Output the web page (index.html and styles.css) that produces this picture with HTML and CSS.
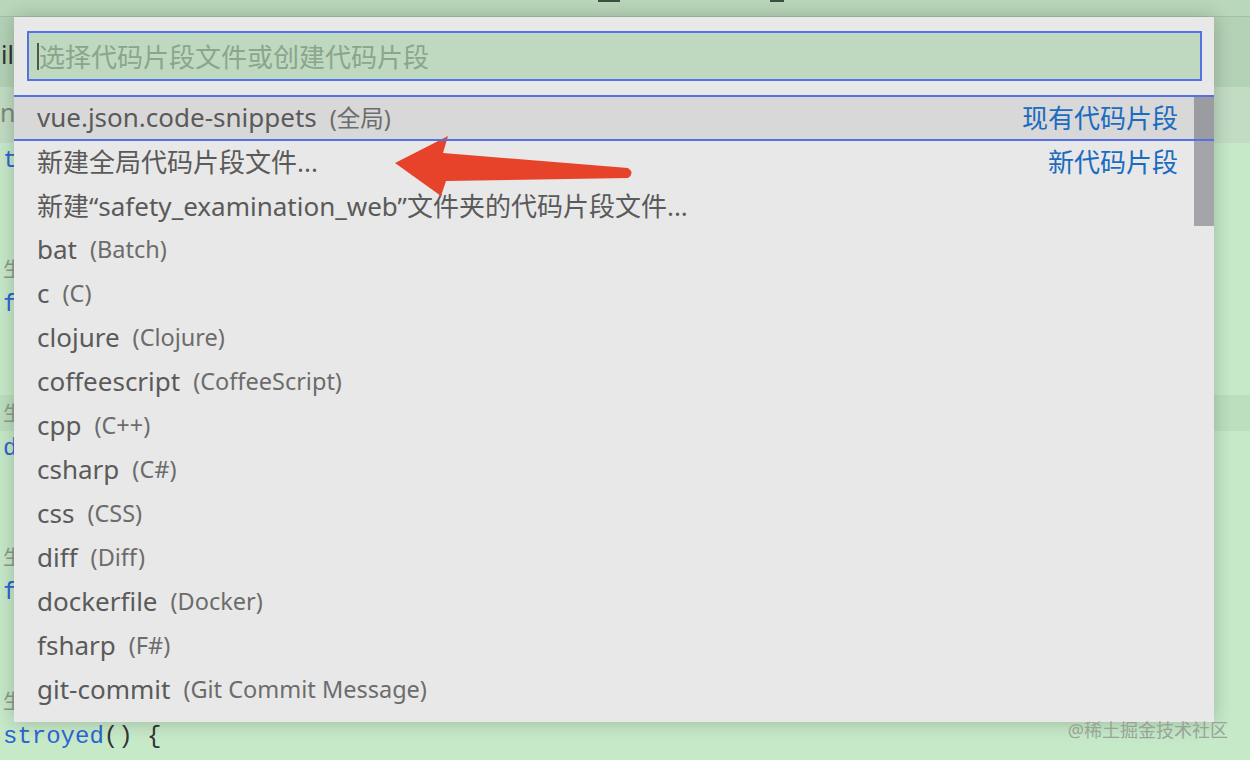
FILE: index.html
```html
<!DOCTYPE html>
<html lang="zh-CN">
<head>
    <meta charset="UTF-8">
    <meta name="viewport" content="width=device-width, initial-scale=1.0">
    <title>代码片段</title>
    <link rel="stylesheet" href="styles.css">
</head>
<body>
    <div class="titlebar">
        <span class="title-bit"></span>
        <span class="title-bit short"></span>
    </div>
    <div class="tabbar"><span class="tab">il</span></div>

    <div class="editor">
        <div class="crumbs clip">np</div>
        <div class="line clip"><span class="kw">t</span></div>
        <div class="line"></div>
        <div class="line"></div>
        <div class="line clip lens">生</div>
        <div class="line clip"><span class="kw">f</span></div>
        <div class="line"></div>
        <div class="line"></div>
        <div class="line clip lens current">生</div>
        <div class="line clip"><span class="kw">d</span></div>
        <div class="line"></div>
        <div class="line"></div>
        <div class="line clip lens">生</div>
        <div class="line clip"><span class="kw">f</span></div>
        <div class="line"></div>
        <div class="line"></div>
        <div class="line clip lens">生</div>
        <div class="line"><span class="kw">stroyed</span>() {</div>
    </div>

    <div class="picker">
        <div class="search">
            <div class="search-box">
                <span class="caret"></span>
                <span class="placeholder">选择代码片段文件或创建代码片段</span>
            </div>
        </div>
        <div class="list">
            <div class="row selected">
                <span class="label">vue.json.code-snippets</span>
                <span class="desc">(全局)</span>
                <span class="kind">现有代码片段</span>
            </div>
            <div class="row">
                <span class="label">新建全局代码片段文件...</span>
                <span class="kind">新代码片段</span>
            </div>
            <div class="row"><span class="label">新建“safety_examination_web”文件夹的代码片段文件...</span></div>
            <div class="row"><span class="label">bat</span><span class="desc">(Batch)</span></div>
            <div class="row"><span class="label">c</span><span class="desc">(C)</span></div>
            <div class="row"><span class="label">clojure</span><span class="desc">(Clojure)</span></div>
            <div class="row"><span class="label">coffeescript</span><span class="desc">(CoffeeScript)</span></div>
            <div class="row"><span class="label">cpp</span><span class="desc">(C++)</span></div>
            <div class="row"><span class="label">csharp</span><span class="desc">(C#)</span></div>
            <div class="row"><span class="label">css</span><span class="desc">(CSS)</span></div>
            <div class="row"><span class="label">diff</span><span class="desc">(Diff)</span></div>
            <div class="row"><span class="label">dockerfile</span><span class="desc">(Docker)</span></div>
            <div class="row"><span class="label">fsharp</span><span class="desc">(F#)</span></div>
            <div class="row"><span class="label">git-commit</span><span class="desc">(Git Commit Message)</span></div>
            <div class="thumb"></div>
        </div>
    </div>

    <!-- annotation arrow drawn over the screenshot -->
    <svg class="arrow" width="1250" height="760" viewBox="0 0 1250 760">
        <path d="M395 163 L448 136 L443 153 L628 168 Q635 173 628 178 L446 181 L441 196 Z" fill="#e6432a"/>
    </svg>

    <div class="watermark">@稀土掘金技术社区</div>
</body>
</html>
```

FILE: styles.css
```css
body {
    position: relative;
    width: 1250px;
    height: 760px;
    margin: 0;
    overflow: hidden;
    background-color: #c6e9c8;
    font-family: "Noto Sans", "Noto Sans CJK SC", sans-serif;
}

.titlebar {
    display: flex;
    align-items: flex-start;
    gap: 150px;
    height: 16px;
    padding-left: 598px;
    background-color: #b9d7bb;
    border-bottom: 1px solid #a4c1a6;
    overflow: hidden;
}

.title-bit {
    width: 22px;
    height: 2px;
    background-color: #3d5043;
}

.title-bit.short {
    width: 14px;
}

.tabbar {
    height: 70px;
    background-color: #b3d2b6;
}

.tab {
    display: block;
    padding: 20px 0 0 1px;
    font-size: 25px;
    color: #333;
}

.editor {
    font-family: "Liberation Mono", monospace;
    font-size: 24px;
    color: #333;
}

.crumbs {
    height: 56px;
    line-height: 50px;
    font-family: "Noto Sans", sans-serif;
    font-size: 25px;
    color: #7a8a7b;
    background-color: #c2dcc4;
}

.line {
    height: 36px;
    line-height: 36px;
    padding-left: 3px;
    white-space: pre;
}

/* lines that run under the picker only show their first few pixels */
.clip {
    box-sizing: border-box;
    width: 14px;
    overflow: hidden;
}

.crumbs.clip {
    width: auto;
    padding-right: 1236px;
}

.line.current {
    width: auto;
    background-color: #bcdfbe;
}

.lens {
    font-family: "Noto Sans CJK SC", sans-serif;
    font-size: 20px;
    color: #8d9a8e;
}

.kw {
    color: #2c65d3;
}

.picker {
    position: absolute;
    left: 14px;
    top: 17px;
    width: 1200px;
    height: 705px;
    background-color: #e8e8e8;
    box-shadow: 0 0 18px rgba(0, 0, 0, 0.22);
    overflow: hidden;
}

.search {
    padding: 14px 12px 14px 13px;
}

.search-box {
    display: flex;
    align-items: center;
    box-sizing: border-box;
    height: 50px;
    padding-left: 8px;
    border: 2px solid #5571e3;
    background-color: #bed9c0;
}

.caret {
    width: 2px;
    height: 27px;
    background-color: #4a5a4c;
}

.placeholder {
    font-size: 26px;
    color: #8aa58c;
}

.list {
    position: relative;
}

.row {
    position: relative;
    display: flex;
    align-items: center;
    height: 44px;
    padding: 0 36px 0 23px;
    white-space: nowrap;
}

.row.selected {
    background-color: #d8d8d8;
}

.row.selected::after {
    content: "";
    position: absolute;
    left: 0;
    right: 0;
    top: 0;
    bottom: 0;
    border-top: 2px solid #5571e3;
    border-bottom: 2px solid #5571e3;
    z-index: 2;
    margin-bottom: -2px;
}

.label {
    font-size: 26px;
    color: #5a5a5a;
}

.desc {
    margin-left: 13px;
    font-size: 23.5px;
    color: #6c6c6c;
}

.kind {
    margin-left: auto;
    font-size: 26px;
    color: #1b6bc1;
}

.thumb {
    position: absolute;
    top: 0;
    right: 0;
    width: 20px;
    height: 131px;
    background-color: rgba(80, 84, 96, 0.45);
    z-index: 1;
}

.arrow {
    position: absolute;
    left: 0;
    top: 0;
    pointer-events: none;
}

.watermark {
    position: absolute;
    right: 22px;
    bottom: 18px;
    font-size: 18px;
    color: #97a597;
}
```
